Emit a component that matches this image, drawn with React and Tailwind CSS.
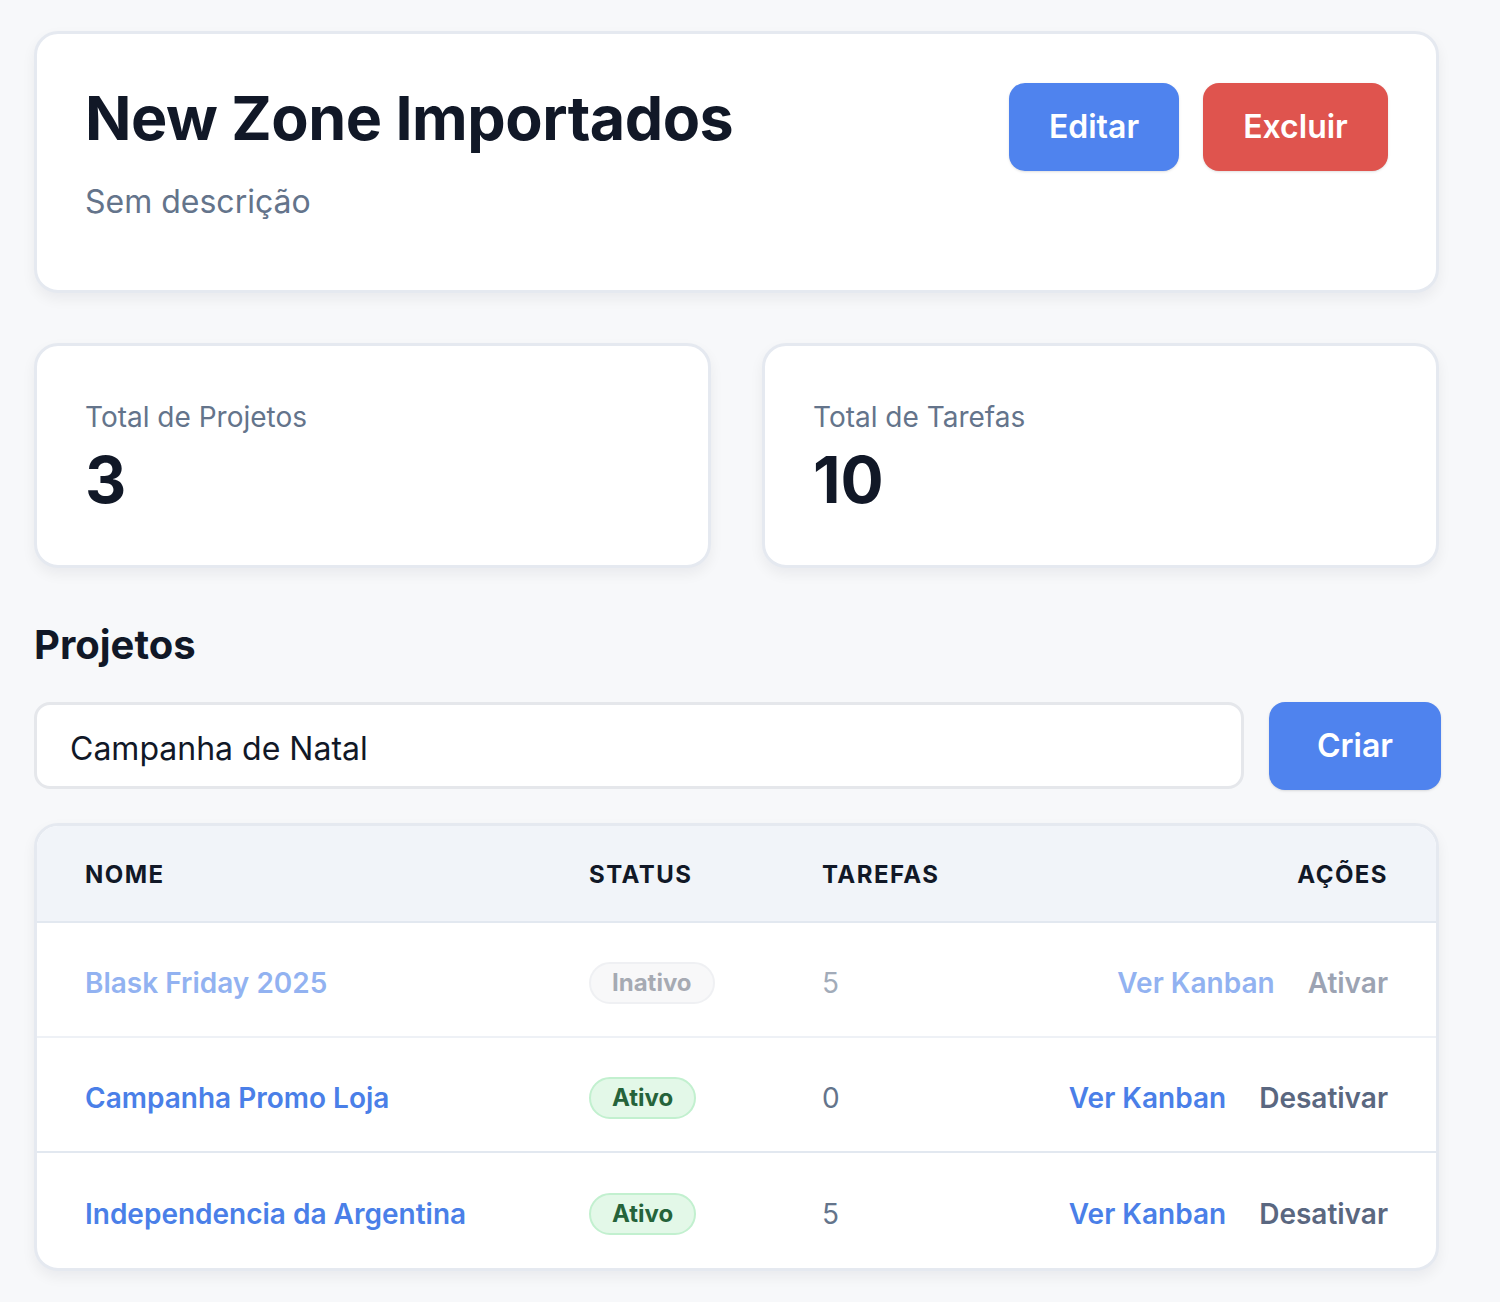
import React, { useState } from 'react';

const projects = [
  { id: 1, name: 'Blask Friday 2025', active: false, tasks: 5 },
  { id: 2, name: 'Campanha Promo Loja', active: true, tasks: 0 },
  { id: 3, name: 'Independencia da Argentina', active: true, tasks: 5 },
];

const StatCard = ({ label, value }) => (
  <div className="bg-white border-[3px] border-[#e5e9f0] rounded-[24px] shadow-[0_6px_14px_rgba(15,23,42,0.06)] px-12 pt-[49px] pb-[49px]">
    <p className="text-[28px] leading-[44px] text-[#64748b]">{label}</p>
    <p className="text-[64px] leading-[72px] font-bold text-[#111827] mt-[5px]">{value}</p>
  </div>
);

const App = () => {
  const [newName, setNewName] = useState('Campanha de Natal');

  return (
    <div className="min-h-screen bg-[#f7f8fa] font-['Inter',sans-serif]">
      <div className="w-[1405px] ml-[34px] pt-[31px] pb-10">
        {/* Header */}
        <div className="bg-white border-[3px] border-[#e5e9f0] rounded-[24px] shadow-[0_6px_14px_rgba(15,23,42,0.06)] px-12 pt-12 pb-[64px] flex justify-between items-start">
          <div>
            <h1 className="text-[61px] leading-[72px] font-bold text-[#111827] tracking-[-0.5px]">New Zone Importados</h1>
            <p className="text-[32px] leading-[48px] text-[#64748b] mt-6">Sem descrição</p>
          </div>
          <div className="flex gap-6 pt-[1px]">
            <button className="h-[88px] w-[170px] rounded-2xl bg-[#4f83ee] text-white text-[32px] font-semibold shadow-sm">Editar</button>
            <button className="h-[88px] w-[185px] rounded-2xl bg-[#df544e] text-white text-[32px] font-semibold shadow-sm">Excluir</button>
          </div>
        </div>

        {/* Stats */}
        <div className="grid grid-cols-2 gap-[51px] mt-[50px]">
          <StatCard label="Total de Projetos" value="3" />
          <StatCard label="Total de Tarefas" value="10" />
        </div>

        {/* Projects */}
        <h2 className="text-[40px] leading-[56px] font-bold text-[#111827] mt-[49px]">Projetos</h2>

        <div className="flex gap-[25px] mt-[29px] -mr-[2px]">
          <input
            value={newName}
            onChange={(e) => setNewName(e.target.value)}
            className="flex-1 h-[87px] bg-white border-[3px] border-[#e5e7eb] rounded-2xl px-[33px] pt-[5px] text-[32px] text-[#111827] outline-none"
          />
          <button className="w-[172px] h-[88px] rounded-2xl bg-[#4f83ee] text-white text-[32px] font-semibold shadow-sm">Criar</button>
        </div>

        <div className="mt-[33px] bg-white border-[3px] border-[#e5e9f0] rounded-[24px] overflow-hidden shadow-[0_6px_14px_rgba(15,23,42,0.06)]">
          <div className="grid grid-cols-[504px_233px_1fr_auto] items-center h-[97px] px-12 pt-[3px] bg-[#f1f4f9] border-b-2 border-[#e2e8f0] text-[24px] font-bold tracking-[0.06em] text-[#111827]">
            <span>NOME</span>
            <span>STATUS</span>
            <span>TAREFAS</span>
            <span className="text-right">AÇÕES</span>
          </div>
          {projects.map((p, i) => (
            <div
              key={p.id}
              className={`grid grid-cols-[504px_233px_1fr_auto] items-center h-[115px] px-12 pt-[6px] ${i < projects.length - 1 ? 'border-b-2 border-[#e2e8f0]' : ''} ${p.active ? '' : 'opacity-60'}`}
            >
              <span className="text-[28px] font-semibold text-[#4a7fe8]">{p.name}</span>
              <span className="flex">
                {p.active ? (
                  <span className="inline-flex items-center h-[42px] px-[21px] rounded-full bg-[#e3f8e8] border-2 border-[#c2f0cf] text-[24px] font-bold text-[#25633a]">Ativo</span>
                ) : (
                  <span className="inline-flex items-center h-[42px] px-[21px] rounded-full bg-[#f3f4f6] border-2 border-[#e5e7eb] text-[24px] font-bold text-[#6b7280]">Inativo</span>
                )}
              </span>
              <span className="text-[28px] text-[#64748b]">{p.tasks}</span>
              <div className="flex items-center gap-[33px] text-[28px] font-semibold">
                <button className="text-[#4a7fe8]">Ver Kanban</button>
                <button className="text-[#5a6780]">{p.active ? 'Desativar' : 'Ativar'}</button>
              </div>
            </div>
          ))}
        </div>
      </div>
    </div>
  );
};

export default App;
